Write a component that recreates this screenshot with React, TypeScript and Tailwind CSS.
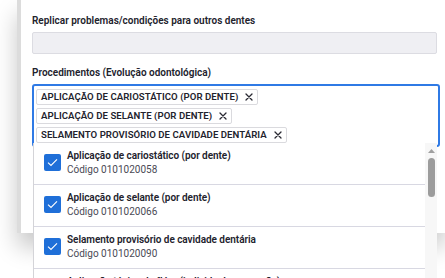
import React from "react";

const chips = [
  "APLICAÇÃO DE CARIOSTÁTICO (POR DENTE)",
  "APLICAÇÃO DE SELANTE (POR DENTE)",
  "SELAMENTO PROVISÓRIO DE CAVIDADE DENTÁRIA",
];

const items = [
  { t: "Aplicação de cariostático (por dente)", c: "Código 0101020058" },
  { t: "Aplicação de selante (por dente)", c: "Código 0101020066" },
  { t: "Selamento provisório de cavidade dentária", c: "Código 0101020090" },
  { t: "Aplicação tópica de flúor (individual por sessão)", c: "Código 0101020074" },
];

function XIcon() {
  return (
    <svg width="8" height="8" viewBox="0 0 8 8" fill="none">
      <path d="M1 1L7 7M7 1L1 7" stroke="#2a2a33" strokeWidth="1.3" strokeLinecap="round" />
    </svg>
  );
}

function Check() {
  return (
    <div className="w-[17px] h-[17px] rounded-[2px] bg-[#1f6fd8] flex items-center justify-center shrink-0">
      <svg width="11" height="9" viewBox="0 0 11 9" fill="none">
        <path d="M1 4.6L4 7.5L10 1.3" stroke="#ffffff" strokeWidth="1.1" />
      </svg>
    </div>
  );
}

export default function App() {
  return (
    <div
      className="w-[445px] h-[278px] bg-white relative overflow-hidden text-[#22222c]"
      style={{ fontFamily: "Roboto, 'Liberation Sans', sans-serif" }}
    >
      <div className="ml-[17px] h-[233px] border-l-4 border-[#dcdcdc] bg-white shadow-[0_14px_22px_rgba(0,0,0,0.22)] pl-[11px] pr-[6px] relative">
        <div className="pt-[14px] text-[10px] font-semibold leading-[13px]">
          Replicar problemas/condições para outros dentes
        </div>
        <div className="mt-[5px] h-[22px] w-[405px] bg-[#efeff3] border border-[#dcdce2] rounded-[2px]" />
        <div className="mt-[12px] text-[10px] font-semibold leading-[13px]">
          Procedimentos (Evolução odontológica)
        </div>
        <div className="mt-[5px] w-[408px] h-[63px] border-2 border-[#2f7ae5] rounded-[3px] px-[2px] pt-[3px] flex flex-col items-start gap-[3px]">
          {chips.map((c) => (
            <div
              key={c}
              className="h-[16px] flex items-center gap-[7px] border border-[#dadade] rounded-[2px] pl-[4px] pr-[4px] bg-white"
            >
              <span className="text-[9.6px] font-semibold leading-none tracking-[0.05px]">{c}</span>
              <XIcon />
            </div>
          ))}
        </div>
      </div>

      <div className="absolute left-[33px] top-[143px] w-[404px] h-[160px] bg-white border-l border-[#d4d4d8] flex">
        <div className="flex-1">
          {items.map((it) => (
            <div key={it.c} className="flex items-center gap-[6px] pl-[10px] pt-[6px] pb-[8px] border-b border-[#d8d8e2]">
              <Check />
              <div className="flex flex-col">
                <span className="text-[10px] font-semibold leading-[13.5px] tracking-[-0.05px]">{it.t}</span>
                <span className="text-[10px] leading-[13.5px] text-[#4a4a55]">{it.c}</span>
              </div>
            </div>
          ))}
        </div>
        <div className="w-[12px] bg-[#f7f7f7] flex flex-col items-center pt-[6px]">
          <svg width="7" height="4" viewBox="0 0 7 4">
            <path d="M0 4L3.5 0L7 4Z" fill="#a0a0a0" />
          </svg>
          <div className="mt-[5px] w-[7px] h-[39px] rounded-full bg-[#9c9c9c]" />
        </div>
      </div>
    </div>
  );
}
